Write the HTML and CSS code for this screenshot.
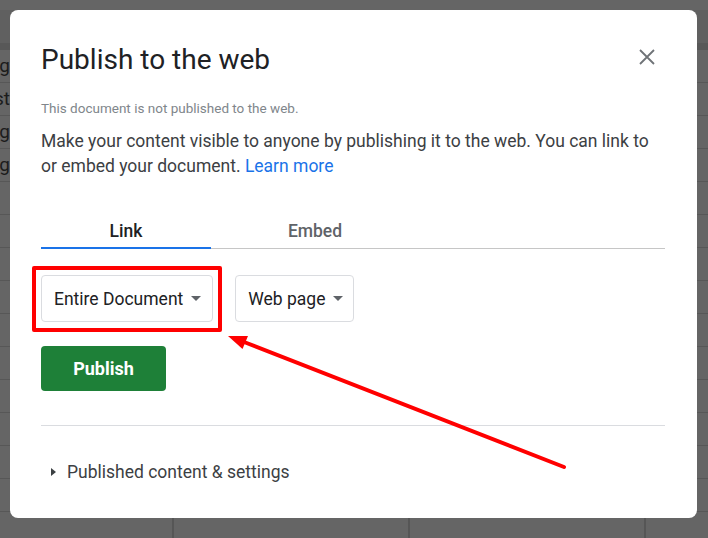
FILE: index.html
```html
<!DOCTYPE html>
<html lang="en">
<head>
	<meta charset="UTF-8">
	<title>Publish to the web</title>
	<link rel="stylesheet" href="styles.css">
</head>
<body>
	<!-- spreadsheet behind the modal -->
	<div class="sheet">
		<div class="sheetHead"></div>
		<div class="row"><span class="cell"><span>Jug</span></span></div>
		<div class="row"><span class="cell"><span>Last</span></span></div>
		<div class="row"><span class="cell"><span>A0g</span></span></div>
		<div class="row"><span class="cell"><span>B0g</span></span></div>
		<div class="row"></div>
		<div class="row"></div>
		<div class="row"></div>
		<div class="row"></div>
		<div class="row"></div>
		<div class="row"></div>
		<div class="row"></div>
		<div class="row"></div>
		<div class="row"></div>
		<div class="row"></div>
		<div class="row"></div>
	</div>

	<div class="overlay">
		<div class="dialog">
			<div class="dialogHead">
				<h1 class="title">Publish to the web</h1>
				<span class="close">
					<svg width="24" height="24" viewBox="0 0 24 24">
						<path d="M5 5 L19 19 M19 5 L5 19" stroke="#6f7377" stroke-width="1.8" fill="none"/>
					</svg>
				</span>
			</div>
			<p class="status">This document is not published to the web.</p>
			<p class="intro">Make your content visible to anyone by publishing it to the web. You can link to or embed your document. <a href="#" class="learn">Learn more</a></p>

			<div class="tabs">
				<a href="#" class="tab tabLink active">Link</a>
				<a href="#" class="tab tabEmbed">Embed</a>
			</div>

			<div class="selects">
				<div class="selectWrap">
					<button class="select">Entire Document <span class="caret"></span></button>
					<span class="mark"></span>
				</div>
				<button class="select selectNarrow">Web page <span class="caret"></span></button>
			</div>

			<button class="publish">Publish</button>

			<div class="divider"></div>

			<div class="more">
				<span class="arrowRight"></span>
				Published content &amp; settings
			</div>
		</div>
	</div>

	<!-- annotation arrow -->
	<svg class="pointer" width="708" height="538" viewBox="0 0 708 538">
		<line x1="564" y1="467" x2="244" y2="342" stroke="#ff0000" stroke-width="4" stroke-linecap="round"/>
		<polygon points="228,336 248,336 242.5,349" fill="#ff0000"/>
	</svg>
</body>
</html>
```

FILE: styles.css
```css
* {
	padding: 0;
	margin: 0;
	box-sizing: border-box;
}
body {
	width: 708px;
	height: 538px;
	overflow: hidden;
	background: #656565;
	font-family: Roboto, "Liberation Sans", sans-serif;
	position: relative;
}
/* dimmed sheet */
.sheet {
	width: 708px;
	height: 538px;
	overflow: hidden;
	background-color: #656565;
	background-image: linear-gradient(to right, transparent 172px, #565656 172px, #565656 174px, transparent 174px, transparent 408px, #565656 408px, #565656 410px, transparent 410px, transparent 644px, #565656 644px, #565656 646px, transparent 646px);
}
.sheetHead {
	height: 50px;
	border-top: 10px solid #656565;
	border-bottom: 7px solid #585858;
	background: #606060;
}
.row {
	height: 33px;
	border-bottom: 1px solid #575757;
}
.cell {
	display: flex;
	justify-content: flex-end;
	width: 10px;
	overflow: hidden;
	white-space: nowrap;
	font-size: 19px;
	line-height: 32px;
	color: #1c1c1c;
}
/* modal */
.overlay {
	position: absolute;
	top: 10px;
	left: 10px;
}
.dialog {
	width: 687px;
	height: 508px;
	padding: 32px 32px 0 31px;
	background: #fff;
	border-radius: 8px;
}
.dialogHead {
	display: flex;
	justify-content: space-between;
	align-items: flex-start;
}
.title {
	font-size: 28px;
	line-height: 36px;
	font-weight: 400;
	color: #202124;
}
.close {
	display: block;
	width: 24px;
	height: 24px;
	margin: 3px 6px 0 0;
}
.status {
	margin-top: 21px;
	font-size: 13.5px;
	line-height: 18px;
	color: #80868b;
}
.intro {
	margin-top: 12px;
	font-size: 17.5px;
	line-height: 25px;
	color: #3c4043;
}
.learn {
	color: #1a73e8;
	text-decoration: none;
}
/* tabs */
.tabs {
	display: flex;
	margin-top: 39px;
	border-bottom: 1px solid #c6c6c6;
}
.tab {
	display: block;
	text-align: center;
	font-size: 17.5px;
	line-height: 24px;
	font-weight: 500;
	color: #5f6368;
	text-decoration: none;
	padding: 1px 0 4px;
	border-bottom: 2px solid transparent;
	margin-bottom: -1px;
}
.tabLink {
	width: 170px;
}
.tabEmbed {
	width: 208px;
}
.tab.active {
	color: #202124;
	border-bottom-color: #1a73e8;
}
/* dropdowns */
.selects {
	display: flex;
	gap: 22px;
	margin-top: 26px;
}
.selectWrap {
	position: relative;
}
.select {
	display: flex;
	align-items: center;
	height: 47px;
	padding: 0 11px 0 12px;
	border: 1px solid #dadce0;
	border-radius: 4px;
	background: #fff;
	font-family: Roboto, "Liberation Sans", sans-serif;
	font-size: 17.5px;
	color: #202124;
}
.selectNarrow {
	padding: 0 10px 0 12px;
}
.caret {
	display: block;
	width: 0;
	height: 0;
	margin-left: 8px;
	border-left: 5px solid transparent;
	border-right: 5px solid transparent;
	border-top: 5px solid #5f6368;
}
/* red highlight drawn over the first select */
.mark {
	position: absolute;
	top: -9px;
	left: -9px;
	right: -9px;
	bottom: -10px;
	border: 4px solid #ff0000;
	border-radius: 2px;
	pointer-events: none;
}
.publish {
	display: block;
	margin-top: 24px;
	width: 125px;
	height: 45px;
	border: none;
	border-radius: 4px;
	background: #1e8038;
	color: #fff;
	font-family: Roboto, "Liberation Sans", sans-serif;
	font-size: 18px;
	font-weight: 700;
}
.divider {
	margin-top: 34px;
	height: 1px;
	background: #dadce0;
}
.more {
	display: flex;
	align-items: center;
	margin-top: 34px;
	font-size: 17.5px;
	line-height: 24px;
	color: #3c4043;
}
.arrowRight {
	display: block;
	width: 0;
	height: 0;
	margin: 0 11px 0 10px;
	border-top: 4.5px solid transparent;
	border-bottom: 4.5px solid transparent;
	border-left: 5px solid #3c4043;
}
.pointer {
	position: absolute;
	top: 0;
	left: 0;
}
```
